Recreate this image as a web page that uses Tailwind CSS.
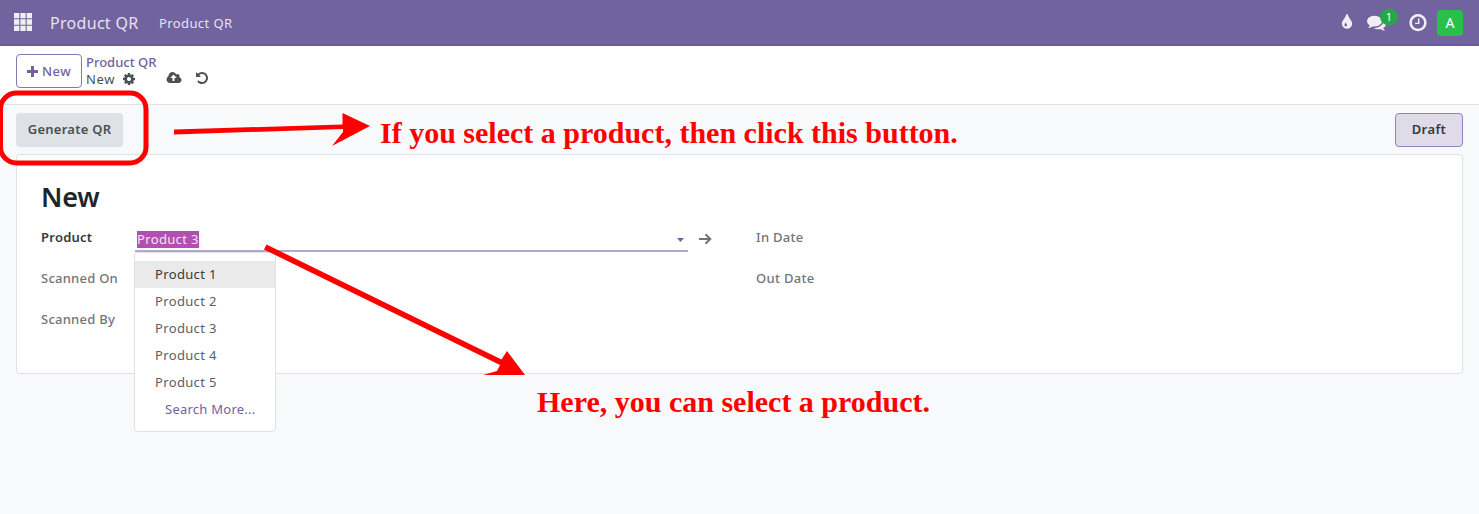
<!DOCTYPE html>
<html lang="en">
<head>
<meta charset="utf-8">
<title>Product QR</title>
<script src="https://cdn.jsdelivr.net/npm/@tailwindcss/browser@4"></script>
</head>
<body class="relative h-[514px] w-[1479px] overflow-hidden bg-[#f8f9fa] font-['Noto_Sans',sans-serif] text-[13px] leading-[18px] text-[#495057] whitespace-nowrap">
<header class="flex h-[46px] items-center border-b-2 border-[#695b95] bg-[#71639e] pl-[14px] pr-4 text-[#e6e2f0]">
  <svg class="-mt-px h-[18px] w-[18px] shrink-0" viewBox="0 0 17 17" fill="#efedf5"><path d="M0 0h5v5H0zM6 0h5v5H6zM12 0h5v5h-5zM0 6h5v5H0zM6 6h5v5H6zM12 6h5v5h-5zM0 12h5v5H0zM6 12h5v5H6zM12 12h5v5h-5z"/></svg>
  <span class="ml-[18px] w-[109px] pt-px text-base tracking-[0.3px]">Product QR</span>
  <span class="pt-px tracking-[0.4px]">Product QR</span>
  <div class="ml-auto flex items-center">
    <svg class="mr-[11px] h-[18px] w-[18px]" viewBox="0 0 1792 1792" fill="#f1eff6"><path d="M896 1152q0-36-20-69-1-1-15.5-22.5t-25.5-38-25-44-21-50.5q-4-16-21-16t-21 16q-7 23-21 50.5t-25 44-25.5 38-15.5 22.5q-20 33-20 69 0 53 37.5 90.5t90.5 37.5 90.5-37.5 37.5-90.5zm512-128q0 212-150 362t-362 150-362-150-150-362q0-145 81-275 6-9 62.5-90.5t101-151 99.5-178 83-201.5q9-30 34-47t51-17 51.5 17 33.5 47q28 93 83 201.5t99.5 178 101 151 62.5 90.5q81 127 81 275z" transform="translate(0 40)"/></svg>
    <div class="relative mr-[22px]">
      <svg class="h-[19px] w-[19px]" viewBox="0 0 1792 1792" fill="#f1eff6"><path d="M1408 768q0 139-94 257t-256.5 186.5-353.5 68.5q-86 0-176-16-124 88-278 128-36 9-86 16h-3q-11 0-20.5-8t-11.5-21q-1-3-1-6.5t.5-6.5 2-6l2.5-5 3.5-5.5 4-5 4.5-5 4-4.5q5-6 23-25t26-29.5 22.5-29 25-38.5 20.5-44q-124-72-195-177t-71-224q0-139 94-257t256.5-186.5 353.5-68.5 353.5 68.5 256.5 186.5 94 257zm384 256q0 120-71 224.5t-195 176.5q10 24 20.5 44t25 38.5 22.5 29 26 29.5 23 25q1 1 4 4.5t4.5 5 4 5 3.5 5.5l2.5 5 2 6 .5 6.5-1 6.5q-3 14-13 22t-22 7q-50-7-86-16-154-40-278-128-90 16-176 16-271 0-472-132 58 4 88 4 161 0 309-45t264-129q125-92 192-212t67-254q0-77-23-152 129 71 204 178t75 230z"/></svg>
      <span class="absolute -top-[4px] left-[13px] flex h-[16px] w-[18px] items-center justify-center rounded-full bg-[#28a745] text-[11px] text-white">1</span>
    </div>
    <svg class="mr-[9px] h-[20px] w-[20px]" viewBox="0 0 1792 1792" fill="#f1eff6"><path d="M1024 544v448q0 14-9 23t-23 9h-320q-14 0-23-9t-9-23v-64q0-14 9-23t23-9h224v-352q0-14 9-23t23-9h64q14 0 23 9t9 23zm416 352q0-148-73-273t-198-198-273-73-273 73-198 198-73 273 73 273 198 198 273 73 273-73 198-198 73-273zm224 0q0 209-103 385.5t-279.5 279.5-385.5 103-385.5-103-279.5-279.5-103-385.5 103-385.5 279.5-279.5 385.5-103 385.5 103 279.5 279.5 103 385.5z" transform="translate(0 60)"/></svg>
    <span class="mt-px flex h-[26px] w-[26px] items-center justify-center rounded bg-[#28bf4b] text-[14px] text-white">A</span>
  </div>
</header>
<section class="flex h-[59px] border-b border-[#dee2e6] bg-white pl-4 pt-2">
  <button class="flex h-[34px] w-[66px] items-center rounded border border-[#8479ae] pl-[10px] font-medium text-[#71639e]">
    <svg class="mr-1 h-[11px] w-[11px]" viewBox="0 0 11 11" fill="#71639e"><path d="M4 0h3v4h4v3H7v4H4V7H0V4h4z"/></svg><span class="tracking-[0.5px]">New</span>
  </button>
  <div class="ml-1">
    <div class="h-[17px] leading-[17px] font-medium text-[#71639e]">Product QR</div>
    <div class="-mt-px flex h-[17px] items-center">
      <span class="w-[36px] tracking-[0.6px]">New</span>
      <svg class="h-[14px] w-[14px]" viewBox="0 0 1792 1792" fill="#495057"><path d="M1152 896q0-106-75-181t-181-75-181 75-75 181 75 181 181 75 181-75 75-181zm512-109v222q0 12-8 23t-20 13l-185 28q-19 54-39 91 35 50 107 138 10 12 10 25t-9 23q-27 37-99 108t-94 71q-12 0-26-9l-138-108q-44 23-91 38-16 136-29 186-7 28-36 28h-222q-14 0-24.5-8.5t-11.5-21.5l-28-184q-49-16-90-37l-141 107q-10 9-25 9-14 0-25-11-126-114-165-168-7-10-7-23 0-12 8-23 15-21 51-66.5t54-70.5q-27-50-41-99l-183-27q-13-2-21-12.5t-8-23.5v-222q0-12 8-23t19-13l186-28q14-46 39-92-40-57-107-138-10-12-10-24 0-10 9-23 26-36 98.5-107.5t94.5-71.5q13 0 26 10l138 107q44-23 91-38 16-136 29-186 7-28 36-28h222q14 0 24.5 8.5t11.5 21.5l28 184q49 16 90 37l142-107q9-9 24-9 13 0 25 10 129 119 165 170 7 8 7 22 0 12-8 23-15 21-51 66.5t-54 70.5q26 50 41 98l183 28q13 2 21 12.5t8 23.5z"/></svg>
      <svg class="-mt-px ml-[30px] h-[14px] w-[16px]" viewBox="0 0 1920 1792" fill="#495057"><path d="M1280 864q0-14-9-23l-352-352q-9-9-23-9t-23 9l-351 351q-10 12-10 24 0 14 9 23t23 9h224v352q0 13 9.5 22.5t22.5 9.5h192q13 0 22.5-9.5t9.5-22.5v-352h224q13 0 22.5-9.5t9.5-22.5zm640 288q0 159-112.5 271.5t-271.5 112.5h-1088q-185 0-316.5-131.5t-131.5-316.5q0-130 70-240t188-165q-2-30-2-43 0-212 150-362t362-150q156 0 285.5 87t188.5 231q71-62 166-62 106 0 181 75t75 181q0 76-41 138 130 31 213.5 135.5t83.5 238.5z"/></svg>
      <svg class="-mt-px ml-[13px] h-[14px] w-[14px]" viewBox="0 0 1792 1792" fill="#495057"><path d="M1664 896q0 156-61 298t-164 245-245 164-298 61q-172 0-327-72.5t-264-204.5q-7-10-6.5-22.5t8.5-20.5l137-138q10-9 25-9 16 2 23 12 73 95 179 147t225 52q104 0 198.5-40.5t163.5-109.5 109.5-163.5 40.5-198.5-40.5-198.5-109.5-163.5-163.5-109.5-198.5-40.5q-98 0-188 35.5t-160 101.5l137 138q31 30 14 69-17 40-59 40h-448q-26 0-45-19t-19-45v-448q0-42 40-59 39-17 69 14l130 129q107-101 244.5-156.5t284.5-55.5q156 0 298 61t245 164 164 245 61 298z"/></svg>
    </div>
  </div>
</section>
<main class="px-4 pt-2">
  <div class="flex h-[34px] justify-between">
    <button class="h-[34px] w-[107px] rounded bg-[#dee2e6] pb-[2px] text-center font-semibold tracking-[0.25px] text-[#495057]">Generate QR</button>
    <span class="flex h-[34px] w-[68px] items-center justify-center rounded border border-[#8f83bb] bg-[#dfdbe9] pb-[2px] font-semibold tracking-[0.4px] text-[#343a40]">Draft</span>
  </div>
  <section class="mt-[7px] flex h-[220px] flex-col rounded border border-[#dee2e6] bg-white px-6 pt-[24px]">
    <h1 class="h-[36px] text-[27px] leading-[36px] font-semibold tracking-[-0.2px] text-[#212529]">New</h1>
    <div class="mt-[13px] flex font-medium text-[#71757a]">
      <div class="w-[94px] space-y-[23px] tracking-[0.25px]">
        <div class="font-semibold text-[#343a40]">Product</div><div>Scanned On</div><div>Scanned By</div>
      </div>
      <div class="relative -mt-[2px] flex h-[26px] w-[553px] items-center border-b-2 border-[#b0a8cf] font-normal tracking-[0.35px]">
        <span class="ml-[2px] mt-[2px] h-[17px] w-[62px] bg-[#b24fb2] leading-[17px] text-[#f3e3f3]">Product 3</span>
        <svg class="ml-auto mr-1 mt-[4px] h-[4px] w-[7px]" viewBox="0 0 7 4" fill="#71639e"><path d="M0 0h7L3.5 4z"/></svg>
        <ul class="absolute top-[26px] -left-px z-10 h-[180px] w-[142px] rounded border border-[#dee2e6] bg-white pt-2 leading-[27px] text-[#5a6067]">
          <li class="h-[27px] bg-[#eaeaea] pl-[20px] text-[#343a40]">Product 1</li>
          <li class="h-[27px] pl-[20px]">Product 2</li>
          <li class="h-[27px] pl-[20px]">Product 3</li>
          <li class="h-[27px] pl-[20px]">Product 4</li>
          <li class="h-[27px] pl-[20px]">Product 5</li>
          <li class="h-[27px] pl-[30px] tracking-[0.25px] text-[#71639e]">Search More...</li>
        </ul>
      </div>
      <svg class="ml-[11px] mt-[5px] h-[12px] w-[13px]" viewBox="0 0 13 12" fill="none" stroke="#6c757d" stroke-width="2"><path d="M0 6h11M6.500 1.200L11.300 6l-4.800 4.800"/></svg>
      <div class="ml-[44px] space-y-[23px] tracking-[0.3px]"><div>In Date</div><div>Out Date</div></div>
    </div>
  </section>
</main>
<svg class="pointer-events-none absolute top-0 left-0 z-20 h-[514px] w-[1479px]" viewBox="0 0 1479 514">
  <rect x="0.500" y="93" width="145.500" height="70" rx="16" fill="none" stroke="#f00" stroke-width="5"/>
  <g fill="#f00"><path d="M174 129.500L342.500 124.500V113L370 126l-38 20 11-14V129L174 134.500z"/><path d="M266.500 244.500L501.500 359.500l5.500-8.500 18 24H483l14-4 3-6L264 249.500z"/></g>
</svg>
<p class="absolute top-[115px] left-[380px] z-20 font-['Liberation_Serif',serif] text-[30px] leading-[36px] font-bold text-[#f00]">If you select a product, then click this button.</p>
<p class="absolute top-[384px] left-[537px] z-20 font-['Liberation_Serif',serif] text-[30px] leading-[36px] font-bold text-[#f00]">Here, you can select a product.</p>
</body>
</html>
